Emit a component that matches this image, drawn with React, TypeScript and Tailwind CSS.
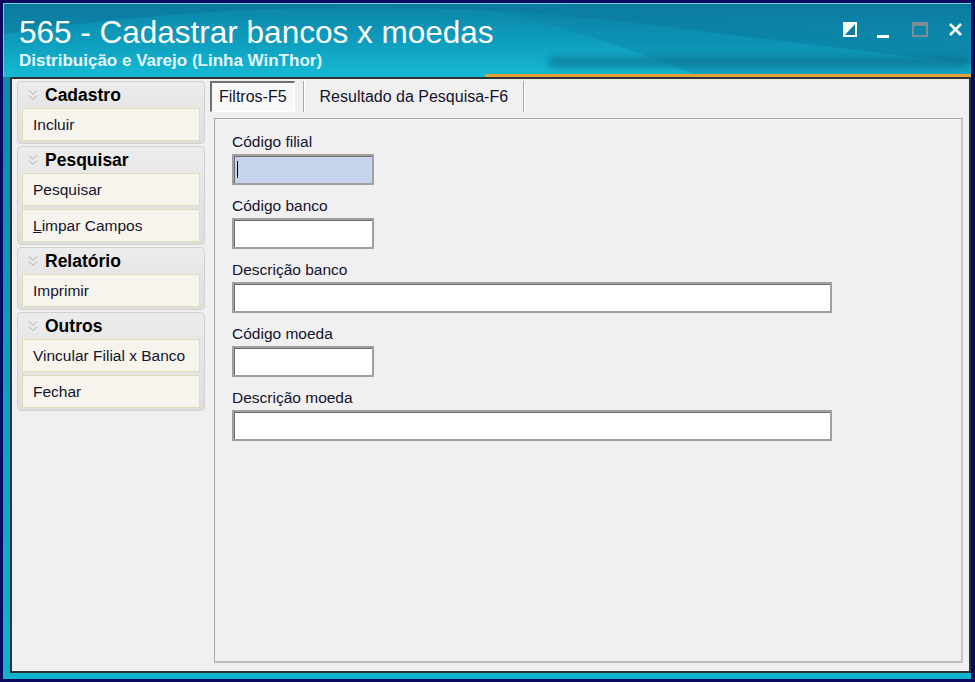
import { ChevronsDown } from "lucide-react";

const groups = [
  { title: "Cadastro", items: ["Incluir"] },
  { title: "Pesquisar", items: ["Pesquisar", "Limpar Campos"] },
  { title: "Relatório", items: ["Imprimir"] },
  { title: "Outros", items: ["Vincular Filial x Banco", "Fechar"] },
];

const fields = [
  { label: "Código filial", wide: false, focused: true },
  { label: "Código banco", wide: false, focused: false },
  { label: "Descrição banco", wide: true, focused: false },
  { label: "Código moeda", wide: false, focused: false },
  { label: "Descrição moeda", wide: true, focused: false },
];

function WindowButtons() {
  return (
    <div className="absolute right-[8px] top-[18px] flex items-start gap-[20px]">
      <svg width="14" height="15" viewBox="0 0 14 15">
        <rect x="1" y="1" width="12" height="13" fill="#0b7fa3" stroke="#fff" strokeWidth="2" />
        <polygon points="1,14 13,1 1,1" fill="#ffffff" />
      </svg>
      <div className="mt-[13px] h-[3px] w-[12px] bg-white" />
      <svg width="16" height="15" viewBox="0 0 16 15" className="ml-[3px]">
        <rect x="1" y="1" width="14" height="13" fill="none" stroke="#7d8d95" strokeWidth="2" />
        <rect x="1" y="1" width="14" height="3" fill="#7d8d95" />
      </svg>
      <svg width="15" height="15" viewBox="0 0 15 15">
        <path d="M2 2 L13 13 M13 2 L2 13" stroke="#fff" strokeWidth="2.6" />
      </svg>
    </div>
  );
}

export default function App() {
  return (
    <div className="w-[975px] h-[682px] bg-[#0a0a5e] pl-[3px] pt-[3px] pr-[4px] pb-[3px] font-['Liberation_Sans',Arial,sans-serif]">
      <div className="flex h-full flex-col bg-gradient-to-b from-[#0a86a8] to-[#11b2cc]">
        {/* title bar */}
        <div className="relative h-[74px] shrink-0 overflow-hidden border-t border-l border-[#6fd0e2] bg-gradient-to-b from-[#0c84a8] via-[#0e9cbd] to-[#16bad3]">
          <svg className="absolute inset-0" width="968" height="74" viewBox="0 0 968 74">
            <path d="M0 30 C 200 0, 420 -6, 640 20 L 968 60 L 968 0 L 0 0 Z" fill="#0b7196" opacity="0.45" />
            <path d="M460 0 C 560 20, 640 50, 700 74 L 968 74 L 968 40 C 820 30, 640 12, 560 0 Z" fill="#0c7da2" opacity="0.35" />
          </svg>
          <div className="absolute left-[544px] top-[52px] h-[12px] w-[420px] rounded-full bg-[#0d6f8c] opacity-60 blur-[3px]" />
          <div className="absolute left-[481px] right-0 top-[70px] h-[3px] bg-[#e8a035]" />
          <div className="relative pl-[15px] pt-[11px]">
            <div className="text-[31.5px] leading-[35px] text-white">565 - Cadastrar bancos x moedas</div>
            <div className="mt-[2px] text-[17px] font-bold leading-[18px] text-[#e3f6fa]">
              Distribuição e Varejo (Linha WinThor)
            </div>
          </div>
          <WindowButtons />
        </div>

        {/* client area */}
        <div className="ml-[7px] mb-[6px] flex flex-1 border-2 border-[#2e3436] bg-[#f0f0f0] text-[15.5px] text-[#14142e]">
          {/* side menu */}
          <div className="ml-[5px] mt-[2px] flex w-[188px] flex-col gap-[2px]">
            {groups.map((g) => (
              <div
                key={g.title}
                className="rounded-[4px] border border-[#d2d2d2] bg-gradient-to-b from-[#ececec] to-[#dedede] px-[4px] pb-[2px]"
              >
                <div className="flex h-[26px] items-center gap-[3px] pl-[2px]">
                  <ChevronsDown size={18} strokeWidth={1.3} className="text-[#ababab]" />
                  <span className="text-[17.5px] font-bold text-black">{g.title}</span>
                </div>
                <div className="flex flex-col gap-[3px]">
                  {g.items.map((it) => (
                    <div
                      key={it}
                      className="flex h-[33px] items-center border border-[#e2dbb8] bg-[#f6f4ec] pl-[10px]"
                    >
                      {it === "Limpar Campos" ? (
                        <span>
                          <span className="underline">L</span>impar Campos
                        </span>
                      ) : (
                        it
                      )}
                    </div>
                  ))}
                </div>
              </div>
            ))}
          </div>

          {/* tabs + filter panel */}
          <div className="ml-[5px] mr-[6px] mt-[2px] mb-[8px] flex flex-1 flex-col">
            <div className="flex h-[31px] items-stretch text-[16px]">
              <div className="flex items-center border-t-2 border-l-2 border-[#707070] border-r border-r-white border-b border-b-white bg-[#f8f8f8] px-[7px]">
                Filtros-F5
              </div>
              <div className="ml-[8px] w-[2px] border-l border-[#a8a8a8] bg-white" />
              <div className="flex items-center px-[15px]">Resultado da Pesquisa-F6</div>
              <div className="w-[2px] border-l border-[#a8a8a8] bg-white" />
            </div>
            <div className="ml-[4px] mt-[6px] flex-1 border border-[#a9a9a9] border-b-2 border-r-2 border-b-[#bdbdbd] border-r-[#c6c6c6] pl-[17px] pt-[13px]">
              {fields.map((f) => (
                <div key={f.label} className="mb-[11px]">
                  <div className="h-[22px] leading-[20px]">{f.label}</div>
                  <div
                    className={
                      (f.wide ? "w-[600px] " : "w-[142px] ") +
                      (f.focused ? "bg-[#c6d4ee] " : "bg-white ") +
                      "flex h-[31px] items-center border-2 border-[#a0a0a0] shadow-[inset_1px_1px_0_#6e6e6e]"
                    }
                  >
                    {f.focused && <div className="ml-[3px] h-[17px] w-[1px] bg-black" />}
                  </div>
                </div>
              ))}
            </div>
          </div>
        </div>
      </div>
    </div>
  );
}
